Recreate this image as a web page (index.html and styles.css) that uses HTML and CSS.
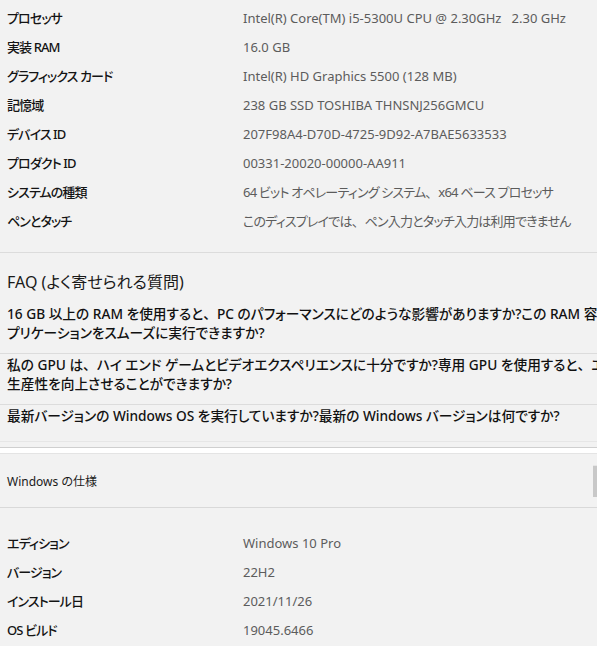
FILE: index.html
```html
<!DOCTYPE html>
<html lang="ja">
<head>
<meta charset="utf-8">
<title>デバイスの仕様</title>
<link rel="stylesheet" href="styles.css">
</head>
<body>
<div class="page">
  <dl class="spec-list">
    <div class="row"><dt>プロセッサ</dt><dd class="pre">Intel(R) Core(TM) i5-5300U CPU @ 2.30GHz   2.30 GHz</dd></div>
    <div class="row"><dt>実装 RAM</dt><dd>16.0 GB</dd></div>
    <div class="row"><dt>グラフィックス カード</dt><dd>Intel(R) HD Graphics 5500 (128 MB)</dd></div>
    <div class="row"><dt>記憶域</dt><dd>238 GB SSD TOSHIBA THNSNJ256GMCU</dd></div>
    <div class="row"><dt>デバイス ID</dt><dd>207F98A4-D70D-4725-9D92-A7BAE5633533</dd></div>
    <div class="row"><dt>プロダクト ID</dt><dd>00331-20020-00000-AA911</dd></div>
    <div class="row"><dt>システムの種類</dt><dd class="jp">64 ビット オペレーティング システム<span class="fw">、</span>x64 ベース プロセッサ</dd></div>
    <div class="row"><dt>ペンとタッチ</dt><dd class="jp">このディスプレイでは<span class="fw">、</span>ペン入力とタッチ入力は利用できません</dd></div>
  </dl>

  <section class="faq">
    <h2 class="faq-title">FAQ (よく寄せられる質問)</h2>
    <div class="faq-item">16 GB 以上の RAM を使用すると<span class="fw">、</span>PC のパフォーマンスにどのような影響がありますか?この RAM 容量でア<br>プリケーションをスムーズに実行できますか?</div>
    <div class="faq-item">私の GPU は<span class="fw">、</span>ハイ エンド ゲームとビデオエクスペリエンスに十分ですか?専用 GPU を使用すると<span class="fw">、</span>エクスペリエンスと<br>生産性を向上させることができますか?</div>
    <div class="faq-item">最新バージョンの Windows OS を実行していますか?最新の Windows バージョンは何ですか?</div>
  </section>

  <div class="section-head">
    <span class="section-title">Windows の仕様</span>
    <span class="head-button"></span>
  </div>

  <dl class="spec-list lower">
    <div class="row"><dt>エディション</dt><dd>Windows 10 Pro</dd></div>
    <div class="row"><dt>バージョン</dt><dd>22H2</dd></div>
    <div class="row"><dt>インストール日</dt><dd>2021/11/26</dd></div>
    <div class="row"><dt>OS ビルド</dt><dd>19045.6466</dd></div>
  </dl>
</div>
</body>
</html>
```

FILE: styles.css
```css
html, body {
  margin: 0;
  padding: 0;
  background: #f2f2f2;
  overflow: hidden;
}

body {
  width: 597px;
  height: 646px;
  font-family: "Noto Sans", "Noto Sans CJK JP", sans-serif;
  font-feature-settings: "palt";
  color: #1a1a1a;
}

.fw {
  font-feature-settings: normal;
  letter-spacing: 0;
}

.page {
  display: flex;
  flex-direction: column;
}

.spec-list {
  margin: 0;
  padding: 3px 0 0 7px;
  display: flex;
  flex-direction: column;
}

.row {
  display: grid;
  grid-template-columns: 236px 1fr;
  height: 29px;
  align-items: center;
  font-size: 13px;
  line-height: 18px;
}

.row dt {
  font-weight: 500;
  color: #141414;
  white-space: nowrap;
  letter-spacing: -0.9px;
}

.row dd {
  margin: 0;
  color: #5c5c5c;
  white-space: nowrap;
}

.row dd.pre {
  white-space: pre;
}

.row dd.jp {
  letter-spacing: -0.8px;
}

.faq {
  margin-top: 17px;
  border-top: 1px solid #dcdcdc;
  padding: 17px 0 16px 7px;
  border-bottom: 1px solid #e6e6e6;
  overflow: hidden;
}

.faq-title {
  margin: 0 0 9px;
  font-size: 16px;
  line-height: 24px;
  font-weight: 400;
  color: #1a1a1a;
}

.faq-item {
  font-size: 13.7px;
  line-height: 19px;
  font-weight: 500;
  white-space: nowrap;
  color: #111;
  padding: 1px 0 11px;
}

.faq-item + .faq-item {
  border-top: 1px solid #dcdcdc;
  margin-left: -7px;
  padding-left: 7px;
}

.faq-item:last-child {
  padding-bottom: 0;
}

.section-head {
  margin-top: 5px;
  border-top: 1px solid #cfcfcf;
  box-shadow: inset 0 5px 0 #ffffff, inset 0 6px 0 #e4e4e4;
  border-bottom: 1px solid #d9d9d9;
  height: 53px;
  padding: 6px 0 0 7px;
  display: flex;
  align-items: center;
  justify-content: space-between;
  font-size: 12px;
}

.section-title {
  color: #1a1a1a;
}

.head-button {
  width: 4px;
  height: 31px;
  background: #c8c8c8;
  border-top: 1px solid #e6e6e6;
}

.spec-list.lower {
  padding-top: 20px;
}
```
